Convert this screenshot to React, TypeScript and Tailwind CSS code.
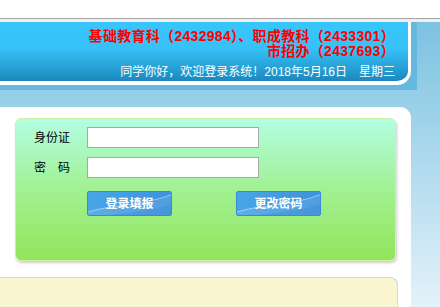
export default function App() {
  return (
    <div className="w-[440px] h-[307px] overflow-hidden flex flex-col bg-white font-['Liberation_Sans','Noto_Sans_CJK_SC',sans-serif]">
      <div className="h-[19px] shrink-0 bg-white border-b border-[#a6a6a6]" />
      <div className="h-[3px] shrink-0 bg-[#efefef]" />
      <div className="flex-1 flex flex-col bg-[linear-gradient(to_bottom,#7bc2e1,#e4f2fa)]">
        <div className="w-[417px] shrink-0 bg-[#67b8de] pr-[6px] pb-[5px]">
          <div className="h-[63px] rounded-br-[14px] border-r-[3px] border-b-[4px] border-white bg-[linear-gradient(to_bottom,#38c5fc_0%,#36c1f9_45%,#1b89bb_100%)] pt-[7px] pr-[13px] text-right">
            <div className="text-[14px] leading-[15px] font-bold text-[#ff0000] tracking-[0.3px]">
              基础教育科（2432984）、职成教科（2433301）
            </div>
            <div className="text-[14px] leading-[15px] font-bold text-[#ff0000] tracking-[0.3px]">
              市招办（2437693）
            </div>
            <div className="mt-[5px] text-[12px] leading-[16px] text-white">
              同学你好，欢迎登录系统！2018年5月16日　星期三
            </div>
          </div>
        </div>
        <div className="h-[17px] shrink-0" />
        <div className="flex-1 w-[411px] bg-white rounded-tr-[11px] pt-[11px] flex flex-col">
          <div className="ml-[15px] w-[381px] h-[143px] shrink-0 rounded-[6px] border border-[#d3efa6] shadow-[1px_2px_3px_rgba(0,0,0,0.2)] bg-[linear-gradient(to_bottom,#b2fee2_0%,#a3f29a_45%,#92e55a_100%)] pt-[8px] pl-[18px]">
            <div className="flex flex-col gap-[9px]">
              <div className="flex items-center h-[21px]">
                <span className="w-[53px] text-[12px] text-black">身份证</span>
                <div className="w-[172px] h-[21px] bg-white border border-[#a8a8a8]" />
              </div>
              <div className="flex items-center h-[21px]">
                <span className="w-[53px] text-[12px] text-black">密　码</span>
                <div className="w-[172px] h-[21px] bg-white border border-[#a8a8a8]" />
              </div>
            </div>
            <div className="flex mt-[13px] ml-[53px] gap-[64px]">
              <Btn label="登录填报" />
              <Btn label="更改密码" />
            </div>
          </div>
          <div className="h-[16px] shrink-0" />
          <div className="flex-1 w-[398px] bg-[#f8f5d0] border-t border-r border-[#d9d9cf] rounded-tr-[8px]" />
        </div>
      </div>
    </div>
  );
}

function Btn({ label }: { label: string }) {
  return (
    <div className="relative w-[85px] h-[25px] rounded-[2px] border border-[#3a89d6] bg-[linear-gradient(to_right,#48a6e6,#3d92dc)] overflow-hidden flex items-center justify-center">
      <svg className="absolute inset-0" width="85" height="25" viewBox="0 0 85 25">
        <path d="M0 25 L0 20 C 25 12, 55 14, 85 2 L85 25 Z" fill="#ffffff" fillOpacity="0.1" />
        <path d="M0 20 C 25 12, 55 14, 85 2" stroke="#ffffff" strokeOpacity="0.45" strokeWidth="1" fill="none" />
        <path d="M0 25 L85 25 L85 12 C 60 20, 30 22, 0 25 Z" fill="#1f6fc8" fillOpacity="0.18" />
      </svg>
      <span className="relative text-[12px] font-bold text-white leading-none">{label}</span>
    </div>
  );
}
